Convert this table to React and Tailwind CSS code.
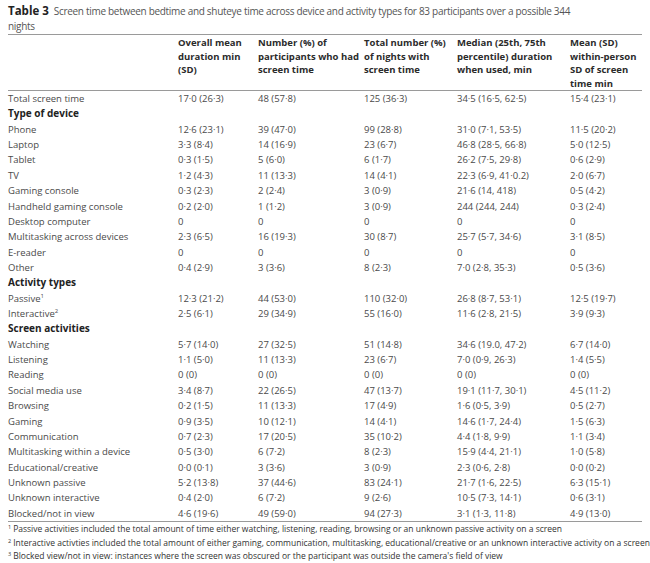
import React from 'react';

const rows = [
  ['Total screen time', '17·0 (26·3)', '48 (57·8)', '125 (36·3)', '34·5 (16·5, 62·5)', '15·4 (23·1)'],
  { section: 'Type of device' },
  ['Phone', '12·6 (23·1)', '39 (47·0)', '99 (28·8)', '31·0 (7·1, 53·5)', '11·5 (20·2)'],
  ['Laptop', '3·3 (8·4)', '14 (16·9)', '23 (6·7)', '46·8 (28·5, 66·8)', '5·0 (12·5)'],
  ['Tablet', '0·3 (1·5)', '5 (6·0)', '6 (1·7)', '26·2 (7·5, 29·8)', '0·6 (2·9)'],
  ['TV', '1·2 (4·3)', '11 (13·3)', '14 (4·1)', '22·3 (6·9, 41·0.2)', '2·0 (6·7)'],
  ['Gaming console', '0·3 (2·3)', '2 (2·4)', '3 (0·9)', '21·6 (14, 418)', '0·5 (4·2)'],
  ['Handheld gaming console', '0·2 (2·0)', '1 (1·2)', '3 (0·9)', '244 (244, 244)', '0·3 (2·4)'],
  ['Desktop computer', '0', '0', '0', '0', '0'],
  ['Multitasking across devices', '2·3 (6·5)', '16 (19·3)', '30 (8·7)', '25·7 (5·7, 34·6)', '3·1 (8·5)'],
  ['E-reader', '0', '0', '0', '0', '0'],
  ['Other', '0·4 (2·9)', '3 (3·6)', '8 (2·3)', '7·0 (2·8, 35·3)', '0·5 (3·6)'],
  { section: 'Activity types' },
  [['Passive', '1'], '12·3 (21·2)', '44 (53·0)', '110 (32·0)', '26·8 (8·7, 53·1)', '12·5 (19·7)'],
  [['Interactive', '2'], '2·5 (6·1)', '29 (34·9)', '55 (16·0)', '11·6 (2·8, 21·5)', '3·9 (9·3)'],
  { section: 'Screen activities' },
  ['Watching', '5·7 (14·0)', '27 (32·5)', '51 (14·8)', '34·6 (19.0, 47·2)', '6·7 (14·0)'],
  ['Listening', '1·1 (5·0)', '11 (13·3)', '23 (6·7)', '7·0 (0·9, 26·3)', '1·4 (5·5)'],
  ['Reading', '0 (0)', '0 (0)', '0 (0)', '0 (0)', '0 (0)'],
  ['Social media use', '3·4 (8·7)', '22 (26·5)', '47 (13·7)', '19·1 (11·7, 30·1)', '4·5 (11·2)'],
  ['Browsing', '0·2 (1·5)', '11 (13·3)', '17 (4·9)', '1·6 (0·5, 3·9)', '0·5 (2·7)'],
  ['Gaming', '0·9 (3·5)', '10 (12·1)', '14 (4·1)', '14·6 (1·7, 24·4)', '1·5 (6·3)'],
  ['Communication', '0·7 (2·3)', '17 (20·5)', '35 (10·2)', '4·4 (1·8, 9·9)', '1·1 (3·4)'],
  ['Multitasking within a device', '0·5 (3·0)', '6 (7·2)', '8 (2·3)', '15·9 (4·4, 21·1)', '1·0 (5·8)'],
  ['Educational/creative', '0·0 (0·1)', '3 (3·6)', '3 (0·9)', '2·3 (0·6, 2·8)', '0·0 (0·2)'],
  ['Unknown passive', '5·2 (13·8)', '37 (44·6)', '83 (24·1)', '21·7 (1·6, 22·5)', '6·3 (15·1)'],
  ['Unknown interactive', '0·4 (2·0)', '6 (7·2)', '9 (2·6)', '10·5 (7·3, 14·1)', '0·6 (3·1)'],
  ['Blocked/not in view', '4·6 (19·6)', '49 (59·0)', '94 (27·3)', '3·1 (1·3, 11·8)', '4·9 (13·0)'],
];

const headers = [
  '',
  'Overall mean duration min (SD)',
  'Number (%) of participants who had screen time',
  'Total number (%) of nights with screen time',
  'Median (25th, 75th percentile) duration when used, min',
  'Mean (SD) within-person SD of screen time min',
];

const notes = [
  ['1', 'Passive activities included the total amount of time either watching, listening, reading, browsing or an unknown passive activity on a screen'],
  ['2', 'Interactive activties included the total amount of either gaming, communication, multitasking, educational/creative or an unknown interactive activity on a screen'],
  ['3', "Blocked view/not in view: instances where the screen was obscured or the participant was outside the camera's field of view"],
];

const cols = 'grid grid-cols-[170px_80px_106px_93px_113px_1fr]';

export default function App() {
  return (
    <div className="w-[650px] h-[563px] bg-white overflow-hidden pl-2 pt-[3px] font-['Open_Sans',sans-serif] text-[#4a4a4a]">
      <p className="text-[10px] leading-[15px] text-[#555] whitespace-nowrap tracking-[-0.3px]">
        <span className="font-bold text-[#222] text-[11.5px] tracking-normal mr-[5px]">Table 3</span>
        Screen time between bedtime and shuteye time across device and activity types for 83 participants over a possible 344
      </p>
      <p className="text-[10px] leading-[15px] text-[#555] tracking-[-0.3px]">nights</p>
      <div className="border-t border-[#9a9a9a] w-[634px]">
        <div className={`${cols} border-b border-[#9a9a9a]`}>
          {headers.map((h, i) => (
            <div key={i} className="text-[9.5px] leading-[13.5px] font-bold text-[#2b2b2b] pr-1 pt-[1px]">
              {h}
            </div>
          ))}
        </div>
        <div className="border-b border-[#9a9a9a]">
          {rows.map((r, i) =>
            r.section ? (
              <div key={i} className="h-[15.37px] leading-[15.37px] text-[10px] font-bold text-[#222]">
                {r.section}
              </div>
            ) : (
              <div key={i} className={`${cols} h-[15.37px] leading-[15.37px] text-[9.5px]`}>
                {r.map((c, j) => (
                  <div key={j} className="whitespace-nowrap">
                    {Array.isArray(c) ? (
                      <>
                        {c[0]}
                        <span className="relative -top-[4px] text-[6px] leading-none">{c[1]}</span>
                      </>
                    ) : (
                      c
                    )}
                  </div>
                ))}
              </div>
            )
          )}
        </div>
        <div className="text-[8.5px] leading-[13.5px] text-[#333] font-medium">
          {notes.map(([n, t]) => (
            <div key={n} className="whitespace-nowrap">
              <span className="relative -top-[3px] text-[5.5px] leading-none mr-[2px]">{n}</span>
              {t}
            </div>
          ))}
        </div>
      </div>
    </div>
  );
}
